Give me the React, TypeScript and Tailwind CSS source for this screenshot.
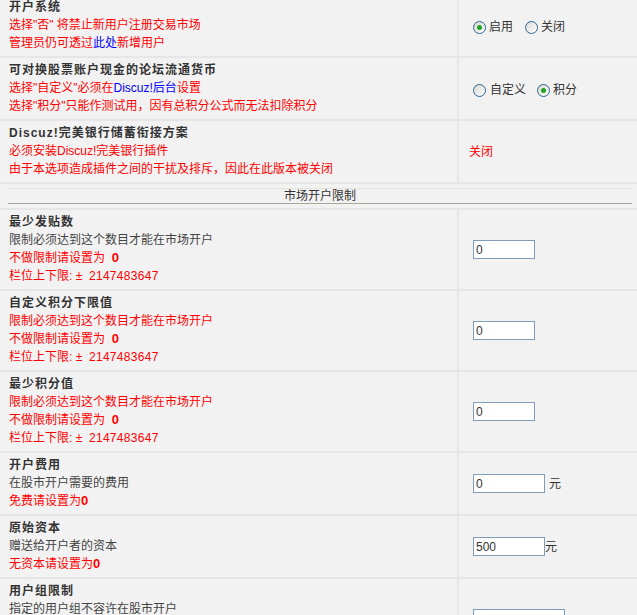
import React from "react";

type Part = { t: string; c?: "red" | "blue" | "gray"; b?: boolean; n?: boolean };
type Line = Part[];

function Radio({ checked }: { checked?: boolean }) {
  return (
    <span className="inline-flex items-center justify-center w-[13px] h-[13px] rounded-full border border-[#2f6693] bg-linear-to-br from-[#d8d8d2] to-white shrink-0">
      {checked && <span className="w-[5px] h-[5px] rounded-full bg-[#22a622]" />}
    </span>
  );
}

function TextInput({ value, w }: { value: string; w: string }) {
  return (
    <input
      readOnly
      value={value}
      className={`${w} h-[19px] ml-[4px] border border-[#7f9db9] bg-white px-[2px] text-[12px] text-[#333] outline-none font-['Liberation_Sans',sans-serif]`}
    />
  );
}

const colorOf = (c?: string) =>
  c === "red" ? "text-[#ff0000]" : c === "blue" ? "text-[#0000ff]" : "text-[#444]";

function Row({ title, lines, right }: { title: string; lines: Line[]; right: React.ReactNode }) {
  return (
    <div className="grid grid-cols-[459px_1fr] border-b-2 border-[#e6e6e6]">
      <div className="border-r-2 border-[#e6e6e6] pl-[9px] pt-[3px] pb-[4px] leading-[18px]">
        <div className="font-bold text-[#333] tracking-[1px]">{title}</div>
        {lines.map((ln, i) => (
          <div key={i} className="whitespace-pre h-[18px]">
            {ln.map((p, j) => (
              <span
                key={j}
                className={`${colorOf(p.c)} ${p.b ? "font-bold text-[13px]" : ""} ${p.n ? "tracking-[0.3px]" : ""}`}
              >
                {p.t}
              </span>
            ))}
          </div>
        ))}
      </div>
      <div className="flex items-center pl-[10px]">{right}</div>
    </div>
  );
}

const limitLines = (firstRed: boolean): Line[] => [
  [{ t: "限制必须达到这个数目才能在市场开户", c: firstRed ? "red" : "gray" }],
  [{ t: "不做限制请设置为  ", c: "red" }, { t: "0", c: "red", b: true }],
  [{ t: "栏位上下限: ±  ", c: "red" }, { t: "2147483647", c: "red", n: true }],
];

export default function App() {
  return (
    <div className="min-h-screen bg-[#f2f2f2] overflow-hidden text-[12px] font-['Liberation_Sans','Noto_Sans_CJK_SC',sans-serif]">
      <div className="-mt-[5px]">
        <Row
          title="开户系统"
          lines={[
            [{ t: "选择\"否\" 将禁止新用户注册交易市场", c: "red" }],
            [
              { t: "管理员仍可透过", c: "red" },
              { t: "此处", c: "blue" },
              { t: "新增用户", c: "red" },
            ],
          ]}
          right={
            <div className="flex items-center ml-[4px] mt-[3px] text-[#333]">
              <Radio checked />
              <span className="ml-[3px]">启用</span>
              <span className="ml-[12px] flex"><Radio /></span>
              <span className="ml-[3px]">关闭</span>
            </div>
          }
        />
        <Row
          title="可对换股票账户现金的论坛流通货币"
          lines={[
            [
              { t: "选择\"自定义\"必须在", c: "red" },
              { t: "Discuz!后台", c: "blue" },
              { t: "设置", c: "red" },
            ],
            [{ t: "选择\"积分\"只能作测试用，因有总积分公式而无法扣除积分", c: "red" }],
          ]}
          right={
            <div className="flex items-center ml-[4px] mt-[3px] text-[#333]">
              <Radio />
              <span className="ml-[4px]">自定义</span>
              <span className="ml-[11px] flex"><Radio checked /></span>
              <span className="ml-[3px]">积分</span>
            </div>
          }
        />
        <Row
          title="Discuz!完美银行储蓄衔接方案"
          lines={[
            [{ t: "必须安装Discuz!完美银行插件", c: "red" }],
            [{ t: "由于本选项造成插件之间的干扰及排斥，因此在此版本被关闭", c: "red" }],
          ]}
          right={<span className="text-[#ff0000] mt-[1px]">关闭</span>}
        />

        <div className="border-b-2 border-[#e6e6e6] pl-[8px] pr-[5px] pt-[4px] pb-[4px]">
          <div className="border-t border-[#e4e4dc] border-b border-b-[#aca899] h-[16px] leading-[14px] text-center text-[#333]">
            市场开户限制
          </div>
        </div>

        <Row title="最少发贴数" lines={limitLines(false)} right={<TextInput value="0" w="w-[62px]" />} />
        <Row title="自定义积分下限值" lines={limitLines(true)} right={<TextInput value="0" w="w-[62px]" />} />
        <Row title="最少积分值" lines={limitLines(true)} right={<TextInput value="0" w="w-[62px]" />} />
        <Row
          title="开户费用"
          lines={[
            [{ t: "在股市开户需要的费用", c: "gray" }],
            [{ t: "免费请设置为", c: "red" }, { t: "0", c: "red", b: true }],
          ]}
          right={
            <div className="flex items-center text-[#333]">
              <TextInput value="0" w="w-[72px]" />
              <span className="ml-[4px]">元</span>
            </div>
          }
        />
        <Row
          title="原始资本"
          lines={[
            [{ t: "赠送给开户者的资本", c: "gray" }],
            [{ t: "无资本请设置为", c: "red" }, { t: "0", c: "red", b: true }],
          ]}
          right={
            <div className="flex items-center text-[#333]">
              <TextInput value="500" w="w-[72px]" />
              <span>元</span>
            </div>
          }
        />
        <Row
          title="用户组限制"
          lines={[
            [{ t: "指定的用户组不容许在股市开户", c: "gray" }],
            [{ t: " ", c: "gray" }],
            [{ t: " ", c: "gray" }],
          ]}
          right={<TextInput value="" w="w-[92px]" />}
        />
      </div>
    </div>
  );
}
